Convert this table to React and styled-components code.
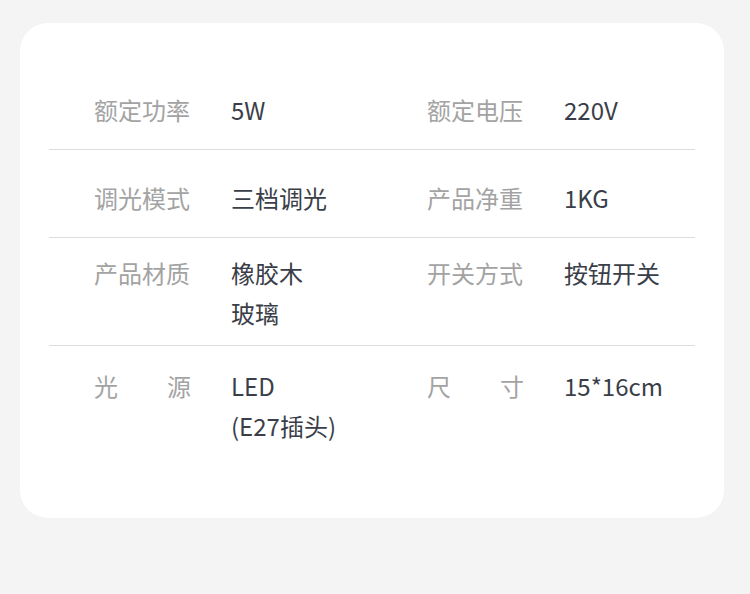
import React from 'react';
import styled, { createGlobalStyle } from 'styled-components';

const GlobalStyle = createGlobalStyle`
   html, body {
      margin: 0;
      padding: 0;
      background: #f4f4f4;
   }
   body {
      font-family: "Noto Sans CJK SC", "Noto Sans", sans-serif;
   }
`;

const specs = [
   {
      pad: [15, 19],
      cells: [
         { label: '额定功率', value: ['5W'] },
         { label: '额定电压', value: ['220V'] },
      ],
   },
   {
      pad: [28, 19],
      cells: [
         { label: '调光模式', value: ['三档调光'] },
         { label: '产品净重', value: ['1KG'] },
      ],
   },
   {
      pad: [15, 12],
      cells: [
         { label: '产品材质', value: ['橡胶木', '玻璃'] },
         { label: '开关方式', value: ['按钮开关'] },
      ],
   },
   {
      pad: [20, 72],
      last: true,
      cells: [
         { label: ['光', '源'], value: ['LED', '(E27插头)'] },
         { label: ['尺', '寸'], value: ['15*16cm'] },
      ],
   },
];

function App() {
   return (
      <>
         <GlobalStyle />
         <Page>
            <Card>
               {specs.map((row, i) => (
                  <Row key={i} $top={row.pad[0]} $bottom={row.pad[1]} $last={row.last}>
                     {row.cells.map((cell, j) => (
                        <Cell key={j}>
                           <Label $spread={Array.isArray(cell.label)}>
                              {Array.isArray(cell.label)
                                 ? cell.label.map((c) => <span key={c}>{c}</span>)
                                 : cell.label}
                           </Label>
                           <Value>
                              {cell.value.map((line) => (
                                 <div key={line}>{line}</div>
                              ))}
                           </Value>
                        </Cell>
                     ))}
                  </Row>
               ))}
            </Card>
         </Page>
      </>
   );
}

const Page = styled.div`
   width: 750px;
   height: 594px;
   padding: 23px 26px 0 20px;
   box-sizing: border-box;
`;

const Card = styled.div`
   background: #fff;
   border-radius: 28px;
   padding: 52px 29px 0;
   display: flex;
   flex-direction: column;
`;

const Row = styled.div`
   display: grid;
   grid-template-columns: 333px 1fr;
   padding: ${(p) => p.$top}px 0 ${(p) => p.$bottom}px 45px;
   border-bottom: ${(p) => (p.$last ? 'none' : '1px solid #dedede')};
`;

const Cell = styled.div`
   display: flex;
   align-items: flex-start;
   font-size: 24px;
   line-height: 40px;
`;

const Label = styled.div`
   width: 97px;
   flex-shrink: 0;
   margin-right: 40px;
   color: #a3a3a3;
   display: flex;
   justify-content: ${(p) => (p.$spread ? 'space-between' : 'flex-start')};
   white-space: nowrap;
`;

const Value = styled.div`
   color: #3a3e48;
   white-space: nowrap;
`;

export default App;
